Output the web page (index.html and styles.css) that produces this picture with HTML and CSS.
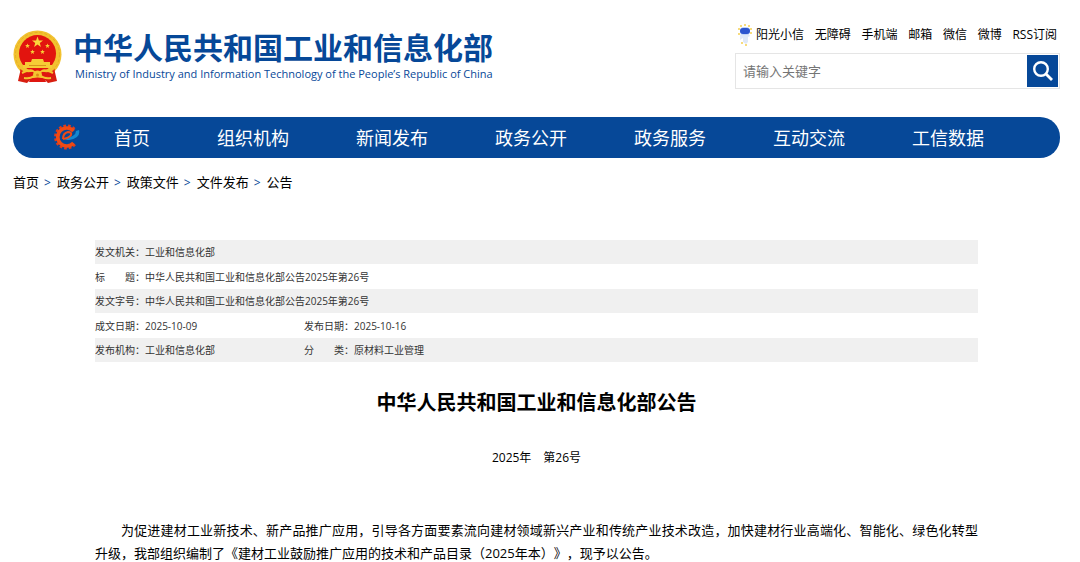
FILE: index.html
```
<!DOCTYPE html>
<html lang="zh-CN">
<head>
    <meta charset="UTF-8">
    <meta name="viewport" content="width=device-width, initial-scale=1.0">
    <title>中华人民共和国工业和信息化部公告</title>
    <link rel="stylesheet" href="styles.css">
</head>
<body>
    <div class="page">
        <header class="header">
            <a href="#" class="logo">
                <!-- 国徽 -->
                <svg class="emblem" viewBox="0 0 49 54" aria-hidden="true">
                    <path d="M8 38 L5 51 L14 53 L18 49 L31 49 L35 53 L44 51 L41 38 Z" fill="#d81e10"/>
                    <circle cx="24.5" cy="24.5" r="24" fill="#f2c230"/>
                    <circle cx="24.5" cy="24.5" r="22" fill="none" stroke="#e6ae24" stroke-width="1" stroke-dasharray="3 2"/>
                    <circle cx="24.5" cy="23.5" r="18.5" fill="#e2140f"/>
                    <polygon fill="#fbd63c" points="24.5,6.5 25.9,10.4 30,10.5 26.8,13 27.9,17 24.5,14.6 21.1,17 22.2,13 19,10.5 23.1,10.4"/>
                    <g fill="#f8cf36">
                        <polygon id="star" points="14.5,13.5 15.1,15.1 16.9,15.2 15.5,16.3 16,18 14.5,17 13,18 13.5,16.3 12.1,15.2 13.9,15.1"/>
                        <use href="#star" x="20"/>
                        <use href="#star" x="5" y="6"/>
                        <use href="#star" x="15" y="6"/>
                    </g>
                    <path d="M19 29h11l1 3h6v3h2v3H10v-3h2v-3h6z" fill="#f6cb35"/>
                    <path d="M16 35.5h17" stroke="#d8951c"/>
                    <path d="M7 39 Q14 45 24.5 40 Q35 45 42 39 L41 45 Q33 49 24.5 45 Q16 49 8 45 Z" fill="#df1710"/>
                    <path d="M9 43 Q17 39 20 41 L24.5 44 L29 41 Q32 39 40 43 M11 48 Q18 49 21 46 M38 48 Q31 49 28 46" fill="none" stroke="#f4c530" stroke-width="2"/>
                    <circle cx="24.5" cy="45" r="4.5" fill="#f4c530"/>
                    <circle cx="24.5" cy="45" r="1.5" fill="#dc8c18"/>
                    <path d="M17 49 Q24.5 46 32 49 L33 52 H16 Z" fill="#df1710"/>
                </svg>
                <span class="logo-text">
                    <span class="logo-cn">中华人民共和国工业和信息化部</span>
                    <span class="logo-en">Ministry of Industry and Information Technology of the People’s Republic of China</span>
                </span>
            </a>
            <div class="tools">
                <div class="links">
                    <a href="#" class="robot">
                        <svg viewBox="0 0 14 22" aria-hidden="true">
                            <g fill="#f5cf50">
                                <circle cx="7" cy="1" r="1"/><circle cx="3" cy="2" r="1"/><circle cx="11" cy="2" r="1"/>
                                <circle cx="1" cy="5" r="1"/><circle cx="13" cy="5" r="1"/><circle cx="1" cy="10" r="1"/>
                                <circle cx="13" cy="9" r="1"/><circle cx="4" cy="19" r="1"/><circle cx="8" cy="21" r="1"/>
                            </g>
                            <path d="M2 11 L4 9 H10 L12 12 L10 13 V18 L8 20 L5 18 V14 L2 16 Z" fill="#dfe8f8"/>
                            <rect x="2" y="3" width="10" height="8" rx="4" fill="#bfd3f6"/>
                            <rect x="2" y="4" width="10" height="6" rx="3" fill="#2c55cf"/>
                        </svg>阳光小信</a>
                    <a href="#">无障碍</a>
                    <a href="#">手机端</a>
                    <a href="#">邮箱</a>
                    <a href="#">微信</a>
                    <a href="#">微博</a>
                    <a href="#">RSS订阅</a>
                </div>
                <form class="search">
                    <input type="text" placeholder="请输入关键字" aria-label="请输入关键字">
                    <button type="button" aria-label="搜索">
                        <svg viewBox="0 0 20 20" aria-hidden="true">
                            <circle cx="8" cy="8" r="6.8" fill="none" stroke="#fff" stroke-width="2.4"/>
                            <path d="M13 13 L19 19" stroke="#fff" stroke-width="2.8"/>
                        </svg>
                    </button>
                </form>
            </div>
        </header>

        <nav class="nav">
            <svg class="nav-icon" viewBox="0 0 26 26" aria-hidden="true">
                <path d="M20.8 20.3 A11 11 0 1 1 20.8 5.7" fill="none" stroke="#e23b1a" stroke-width="3" stroke-dasharray="2.6 1.9"/>
                <path d="M19.5 19 A9 9 0 1 1 19.5 7" fill="none" stroke="#f04a14" stroke-width="3.6"/>
                <path d="M25 6 Q27 14 15 16 Q11 16 10 14 Q22 13 22 7 Z" fill="#1487cf"/>
                <path d="M9 15 Q9 9 14 8 Q18 8 17 11 Q15 14 9 15" fill="none" stroke="#f04a14" stroke-width="2"/>
            </svg>
            <a href="#">首页</a>
            <a href="#">组织机构</a>
            <a href="#">新闻发布</a>
            <a href="#">政务公开</a>
            <a href="#">政务服务</a>
            <a href="#">互动交流</a>
            <a href="#">工信数据</a>
        </nav>

        <div class="crumbs">
            <a href="#">首页</a><span>&gt;</span><a href="#">政务公开</a><span>&gt;</span><a href="#">政策文件</a><span>&gt;</span><a href="#">文件发布</a><span>&gt;</span><a href="#">公告</a>
        </div>

        <main class="article">
            <table class="info">
                <tr>
                    <th>发文机关：</th>
                    <td colspan="3">工业和信息化部</td>
                </tr>
                <tr>
                    <th>标　　题：</th>
                    <td colspan="3">中华人民共和国工业和信息化部公告2025年第26号</td>
                </tr>
                <tr>
                    <th>发文字号：</th>
                    <td colspan="3">中华人民共和国工业和信息化部公告2025年第26号</td>
                </tr>
                <tr>
                    <th>成文日期：</th>
                    <td class="first">2025-10-09</td>
                    <th>发布日期：</th>
                    <td>2025-10-16</td>
                </tr>
                <tr>
                    <th>发布机构：</th>
                    <td class="first">工业和信息化部</td>
                    <th>分　　类：</th>
                    <td>原材料工业管理</td>
                </tr>
            </table>
            <h1>中华人民共和国工业和信息化部公告</h1>
            <p class="number">2025年　第26号</p>
            <p class="content">为促进建材工业新技术、新产品推广应用，引导各方面要素流向建材领域新兴产业和传统产业技术改造，加快建材行业高端化、智能化、绿色化转型升级，我部组织编制了《建材工业鼓励推广应用的技术和产品目录（2025年本）》，现予以公告。</p>
        </main>
    </div>
</body>
</html>
```
FILE: styles.css
```
*{
    box-sizing: border-box;
}
body{
    margin: 0;
    background-color: #fff;
    color: #000;
    font-family: "Open Sans", "Noto Sans CJK SC", sans-serif;
    font-size: 13px;
    text-spacing-trim: space-all;
}
a{
    color: inherit;
    text-decoration: none;
}
.page{
    padding: 24px 20px 0 13px;
}
/* 顶部 */
.header{
    display: flex;
    justify-content: space-between;
    align-items: flex-start;
    height: 93px;
}
.logo{
    display: flex;
    gap: 11px;
    padding-top: 6px;
    color: #064898;
}
.emblem{
    width: 49px;
    height: 54px;
}
.logo-text{
    display: flex;
    flex-direction: column;
    white-space: nowrap;
}
.logo-cn{
    font-size: 30px;
    font-weight: bold;
    line-height: 36px;
}
.logo-en{
    padding-left: 2px;
    font-size: 11px;
    font-weight: 500;
    line-height: 16px;
}
.tools{
    width: 325px;
}
.links{
    display: flex;
    justify-content: space-between;
    padding: 0 3px;
    font-size: 12px;
    line-height: 22px;
    white-space: nowrap;
}
.robot{
    display: flex;
    gap: 4px;
}
.robot svg{
    width: 14px;
    height: 22px;
}
.search{
    display: flex;
    height: 36px;
    margin-top: 7px;
    padding: 1px;
    border: 1px solid #e5e5e5;
}
.search input{
    flex: 1;
    min-width: 0;
    padding: 0 6px;
    border: 0;
    outline: none;
    font: inherit;
}
.search input::placeholder{
    color: #757575;
}
.search button{
    width: 31px;
    padding: 0;
    border: 0;
    background-color: #064898;
}
.search button svg{
    display: block;
    width: 20px;
    height: 20px;
    margin: auto;
}
/* 导航 */
.nav{
    display: flex;
    align-items: center;
    gap: 67px;
    height: 41px;
    padding: 0 0 2px 41px;
    border-radius: 20px;
    background-color: #064898;
    color: #fff;
    font-size: 18px;
    white-space: nowrap;
}
.nav-icon{
    width: 26px;
    height: 26px;
    margin-right: -33px;
}
.crumbs{
    margin-top: 13px;
    line-height: 22px;
}
.crumbs span{
    margin: 0 6px 0 5px;
    color: #064898;
    font-size: 12px;
}
/* 正文 */
.article{
    padding: 46px 82px 0;
}
.info{
    width: 100%;
    border-collapse: collapse;
    color: #333;
    font-size: 10px;
}
.info tr{
    height: 25px;
}
.info tr:nth-child(odd){
    height: 24px;
    background-color: #f0f0f0;
}
.info th, .info td{
    padding: 0;
    font-weight: normal;
    line-height: 16px;
    text-align: left;
}
.info th{
    width: 50px;
}
.info .first{
    width: 159px;
}
h1{
    margin: 26px 0 0;
    font-size: 20px;
    line-height: 30px;
    text-align: center;
}
.number{
    margin: 30px 0 0;
    font-size: 12px;
    line-height: 20px;
    text-align: center;
}
.content{
    margin: 51px 0 0;
    line-height: 23px;
    text-align: justify;
    text-indent: 2em;
}
```
